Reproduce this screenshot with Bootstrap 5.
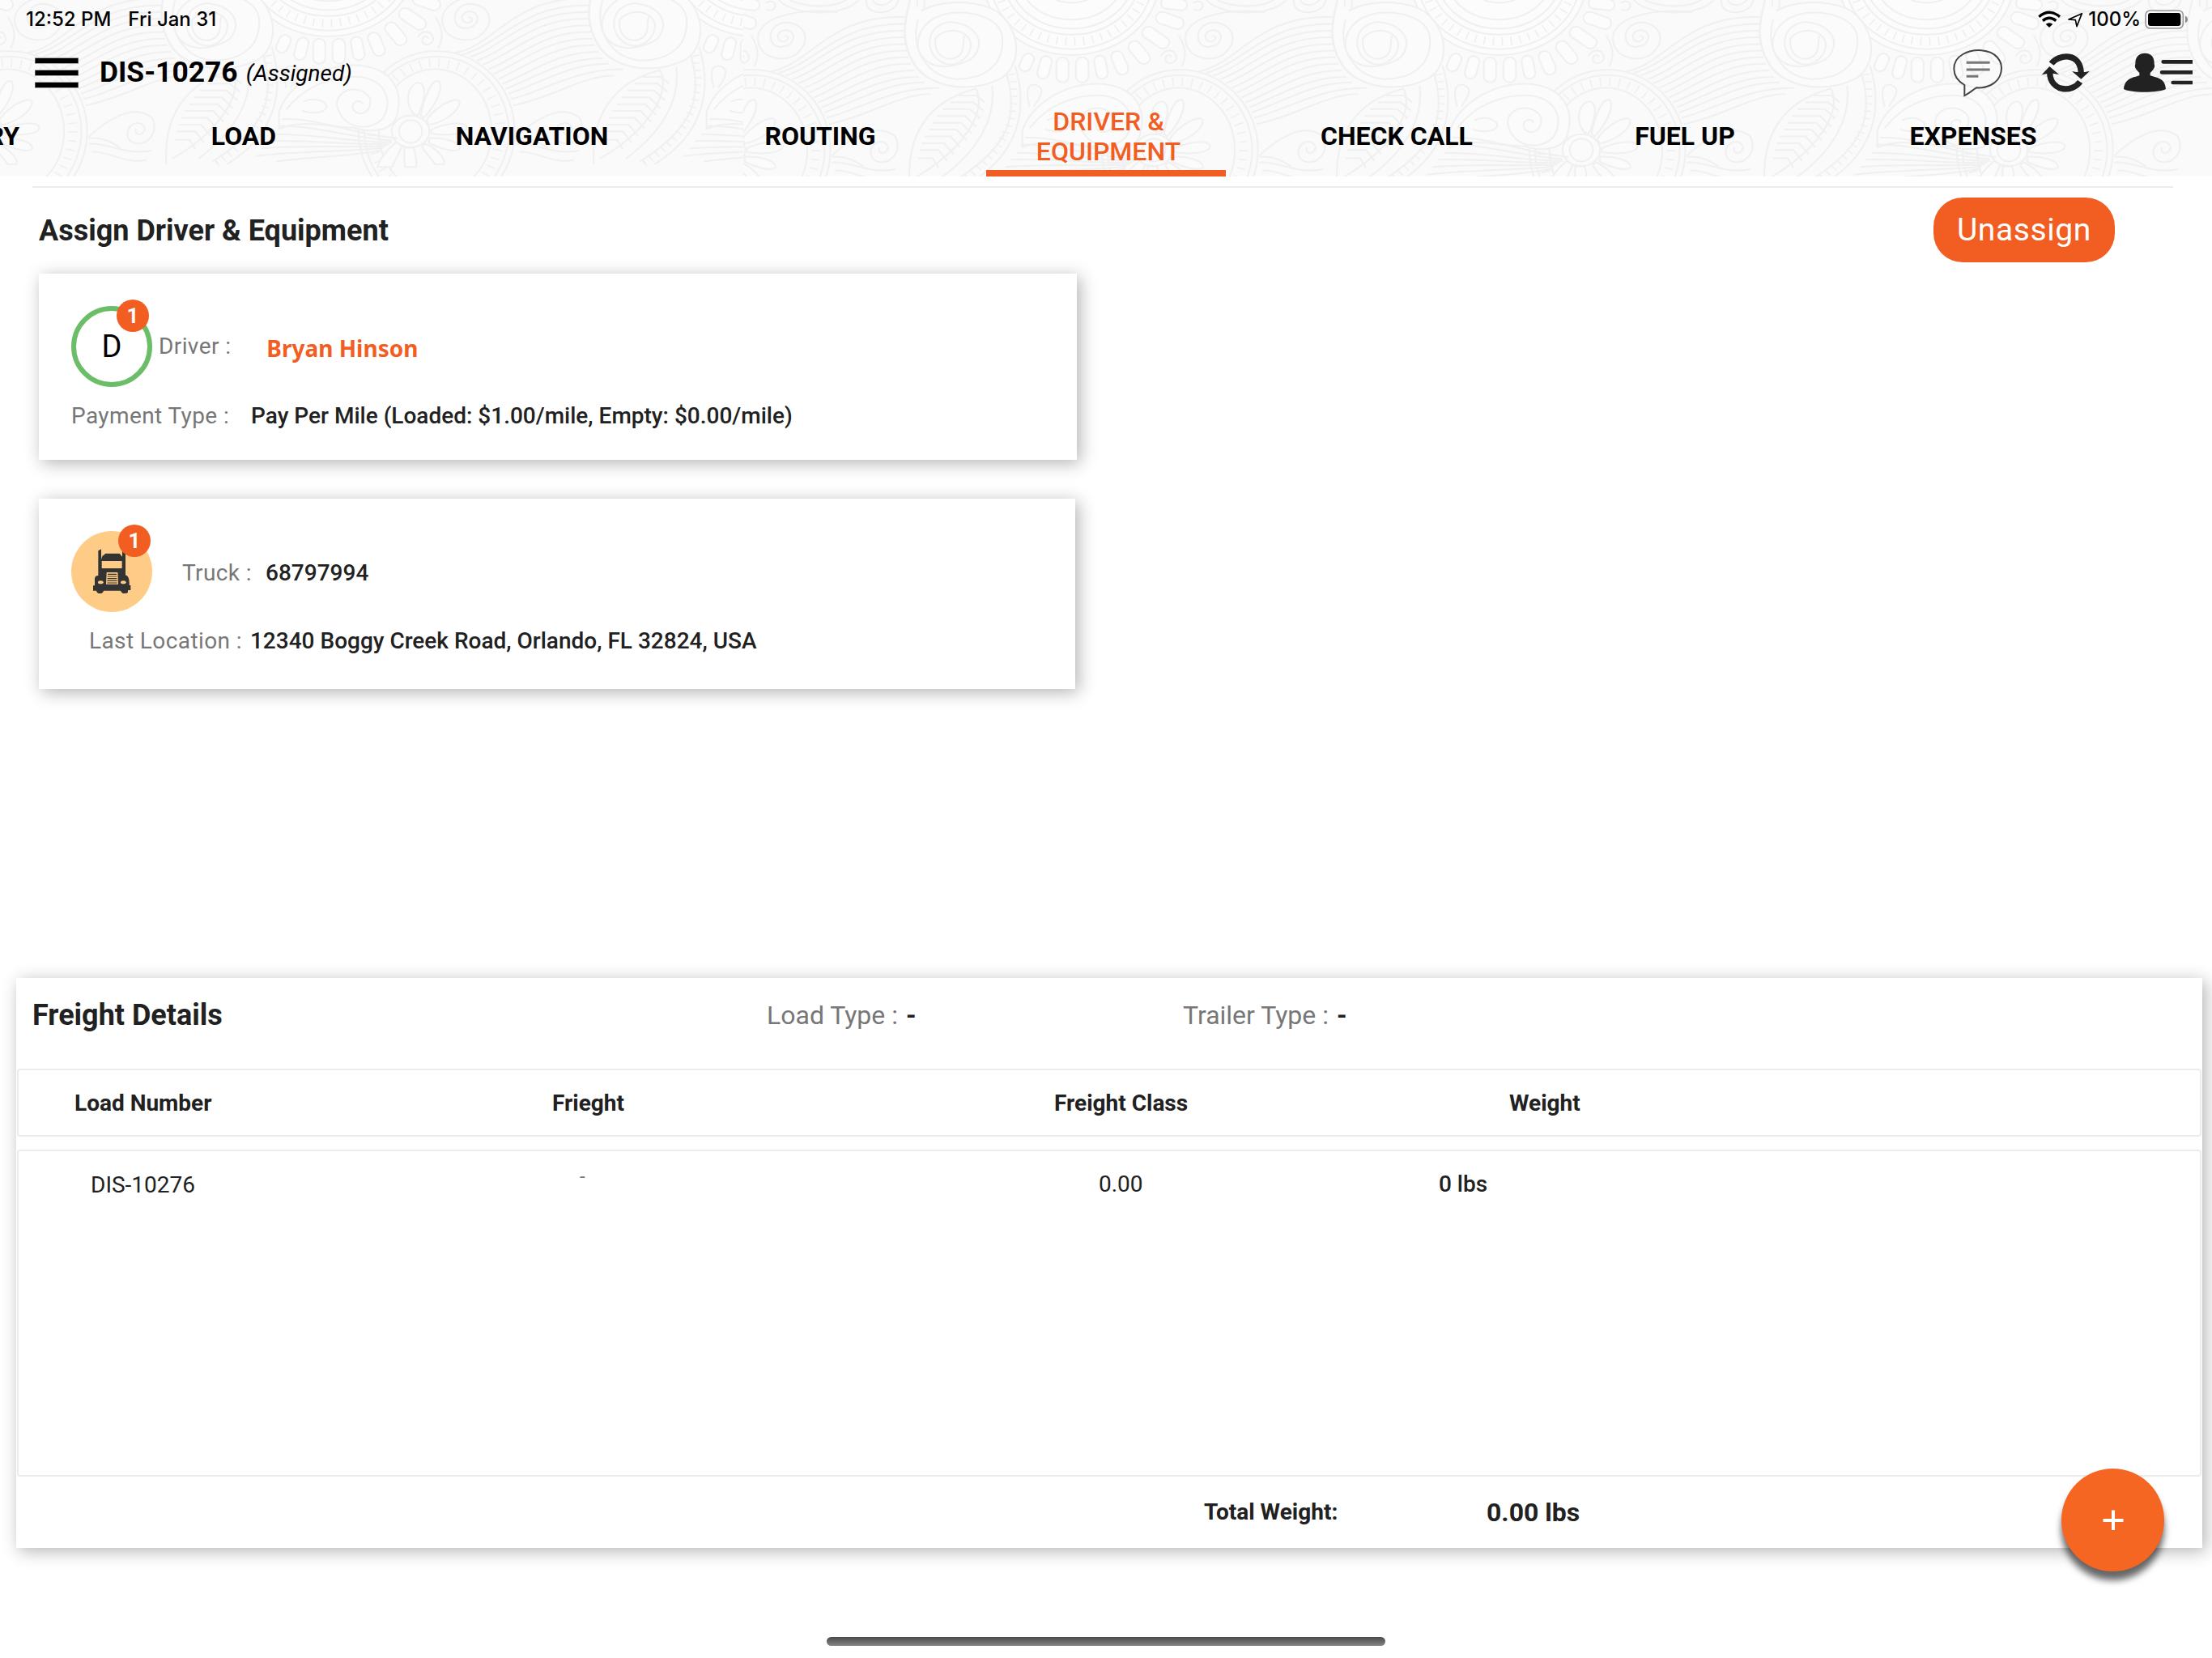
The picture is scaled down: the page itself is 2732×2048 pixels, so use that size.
<!DOCTYPE html>
<html lang="en">
<head>
<meta charset="utf-8">
<meta name="viewport" content="width=device-width, initial-scale=1">
<title>DIS-10276 – Driver &amp; Equipment</title>
<link href="https://cdn.jsdelivr.net/npm/bootstrap@5.3.0/dist/css/bootstrap.min.css" rel="stylesheet">
<style>
  :root { --brand: #f25d22; --ink: #212121; --line: #ececec; }
  body { font-family: Roboto, "Liberation Sans", sans-serif; font-size: 28px; line-height: 32px; color: var(--ink); background: #fff; width: 2732px; height: 2048px; overflow: hidden; }
  svg { display: block; }
  .masthead { height: 218px; background: #fafafa; color: #000; }
  .paisley { inset: 0; width: 2732px; height: 218px; }
  .status-bar { height: 48px; padding: 0 29px 0 32px; font: 500 24px/48px Inter, sans-serif; }
  .status-date { margin-left: 21px; }
  .title-bar { height: 76px; padding: 7px 24px 0 43px; }
  .dispatch-id { font-size: 35.4px; font-weight: 700; line-height: 40px; margin-left: 26px; margin-top: -2px; }
  .dispatch-state { font-size: 28px; font-style: italic; margin-left: 10px; padding-top: 2px; }
  .icon-sync { margin-left: 46px; }
  .icon-crew { margin-left: 41px; }
  .tab-strip { height: 94px; }
  .tab-strip .nav-item { width: 356px; flex: none; }
  .tab-strip .nav-item:first-child { width: 123px; padding-right: 99px; }
  .tab-strip .nav-link { width: 296px; height: 94px; padding: 3px 40px 0; border-bottom: 8px solid transparent; color: #000; font-size: 32px; font-weight: 700; line-height: 37px; text-align: center; }
  .tab-strip .nav-item:first-child .nav-link { width: auto; padding: 3px 0 0; }
  .tab-strip .nav-link.active { color: var(--brand); border-color: var(--brand); font-weight: 500; margin-right: 7px; padding-left: 47px; }
  .rule-top { height: 2px; margin: 12px 48px 0 40px; background: var(--line); }
  .assign-head { height: 106px; padding: 0 120px 0 48px; }
  .assign-title, .freight-title { font-size: 36px; font-weight: 700; line-height: 42px; }
  .btn-unassign { --bs-btn-color: #fff; --bs-btn-bg: var(--brand); --bs-btn-hover-bg: var(--brand); --bs-btn-hover-color: #fff; width: 224px; height: 80px; border: 0; border-radius: 36px; font-size: 39px; line-height: 46px; padding: 0; letter-spacing: .6px; margin-top: -2px; }
  .panel { background: #fff; box-shadow: 4px 4px 20px rgba(0,0,0,.3); }
  .driver-panel { width: 1282px; height: 230px; margin-left: 48px; padding: 40px; }
  .truck-panel { width: 1280px; height: 235px; margin: 48px 0 0 48px; padding: 40px; }
  .avatar { width: 100px; height: 100px; border-radius: 50%; }
  .avatar-driver { border: 6px solid #6bbd68; font-size: 38px; color: #000; }
  .avatar-truck { background: #ffcc88; }
  .count { position: absolute; top: -8px; left: 58px; width: 40px; height: 40px; border-radius: 50%; background: var(--brand); color: #fff; font-size: 26px; font-weight: 700; line-height: 40px; text-align: center; }
  .avatar-driver .count { top: -14px; left: 50px; }
  .lbl { color: #777; font-weight: 400; }
  .val { font-weight: 500; }
  .panel-line { margin-top: 20px; }
  .driver-panel .lbl, .truck-panel .lbl { letter-spacing: .4px; }
  .driver-name { font: 700 28px/36px "Noto Sans", sans-serif; color: var(--brand); margin-left: 44px; padding-top: 3px; }
  .freight { width: 2700px; height: 704px; margin: 357px 0 0 20px; }
  .freight-top { height: 112px; }
  .freight-top .lbl, .freight-top .val { font-size: 32px; line-height: 38px; }
  .freight-top .val { font-weight: 700; margin-left: 3px; }
  .grid-box { border: 2px solid var(--line); border-radius: 4px; margin: 0 1px; }
  .grid-head { height: 84px; padding-top: 1px; font-weight: 700; }
  .grid-body { height: 404px; margin-top: 16px; }
  .grid-foot { height: 88px; }
  .cell { flex: none; white-space: nowrap; }
  .fab { position: absolute; left: 2546px; top: 1814px; width: 127px; height: 127px; border-radius: 50%; background: #f46622; box-shadow: 0 11px 8px rgba(0,0,0,.6); }
  .home-bar { width: 690px; height: 11px; border-radius: 6px; margin: 110px 0 0 1021px; background: linear-gradient(#4a4a4a, #858585); }
</style>
</head>
<body>
<header class="masthead position-relative overflow-hidden">
  <svg class="paisley position-absolute" viewBox="0 0 2732 218" fill="none" stroke="#f0f0f0" stroke-width="6">
    <defs>
      <clipPath id="seamLeft"><rect x="0" y="0" width="918" height="218"/></clipPath>
      <clipPath id="seamRight"><rect x="918" y="0" width="1814" height="218"/></clipPath>
      <g id="tile" transform="scale(.357 .337)">
        <!-- mandala rim and petals -->
        <g fill="#fcfcfc">
          <ellipse cx="480" cy="-80" rx="305" ry="282"/><ellipse cx="480" cy="-80" rx="282" ry="260"/>
          <ellipse cx="480" cy="-80" rx="236" ry="207"/><ellipse cx="480" cy="-80" rx="212" ry="185"/>
          <ellipse cx="480" cy="-80" rx="180" ry="152"/><ellipse cx="480" cy="-80" rx="112" ry="90"/>
        </g>
        <ellipse cx="480" cy="-80" rx="259" ry="233" stroke-width="30" stroke-dasharray="5 26"/>
        <g fill="#fcfcfc">
          <rect x="305" y="195" width="40" height="68" rx="20" transform="rotate(24 325 229)"/>
          <rect x="367" y="205" width="40" height="84" rx="20" transform="rotate(14 387 247)"/>
          <rect x="428" y="210" width="42" height="92" rx="21"/><rect x="495" y="210" width="44" height="92" rx="22"/>
          <rect x="562" y="203" width="40" height="86" rx="20" transform="rotate(-10 582 246)"/>
          <rect x="626" y="185" width="42" height="90" rx="21" transform="rotate(-22 647 230)"/>
          <rect x="692" y="145" width="44" height="95" rx="22" transform="rotate(-38 714 192)"/>
          <rect x="750" y="85" width="44" height="105" rx="22" transform="rotate(-54 772 138)"/>
          <rect x="798" y="25" width="44" height="100" rx="22" transform="rotate(-70 820 75)"/>
          <rect x="815" y="-30" width="40" height="90" rx="20" transform="rotate(-84 835 15)"/>
        </g>
        <path d="M900 10q30 -15 35 10q-5 25 -30 15M790 205q15 -30 45 -15q20 30 -10 42q-25 0 -18 -25q12 -12 20 2M850 130q40 60 10 115"/>
        <!-- small snail -->
        <path d="M1150 45C1050 30 890 50 875 130C865 215 970 235 1010 195C1060 150 1040 85 970 82C910 85 900 165 950 172C1000 175 1015 115 970 110C935 112 935 155 965 152C985 145 980 130 965 132"/>
        <path d="M940 -10C980 60 1180 70 1230 -10M970 -10C1020 30 1150 35 1190 -10M1250 0C1240 60 1350 60 1360 0M1270 -10C1270 25 1320 30 1340 -5M1400 0V90M1425 0V70M1450 0V60"/>
        <!-- waves -->
        <path d="M920 262C1060 235 1120 50 1390 62M945 268C1080 230 1150 80 1390 88M970 277C1090 240 1160 105 1390 112M995 290C1110 250 1180 130 1390 137M1015 305C1130 260 1200 155 1390 162M1035 322C1150 275 1220 180 1392 186M1052 340C1160 290 1240 205 1395 210M1068 358C1170 310 1260 230 1402 234M1082 376C1190 330 1280 255 1415 258M1094 394C1200 350 1300 280 1430 282M1104 412C1220 370 1320 300 1450 302M1112 432C1240 395 1340 320 1500 322M1120 455C1260 425 1360 345 1470 345"/>
        <!-- flower ring -->
        <ellipse cx="855" cy="550" rx="270" ry="295"/><ellipse cx="855" cy="550" rx="250" ry="275"/><ellipse cx="850" cy="550" rx="195" ry="228"/>
        <ellipse cx="853" cy="550" rx="222" ry="251" stroke-width="32" stroke-dasharray="5 28"/>
        <g fill="#fbfbfb">
          <path d="M775 485C740 440 760 370 795 372C825 380 810 450 790 490Z"/>
          <path d="M800 490C810 430 840 350 865 368C880 400 840 470 810 500Z"/>
          <path d="M820 510C850 460 920 420 935 440C935 480 870 520 828 525Z"/>
          <path d="M835 545C880 520 950 510 960 535C955 565 880 565 838 558Z"/>
          <path d="M830 575C880 570 940 590 935 615C915 630 860 610 828 592Z"/>
          <path d="M815 595C850 610 890 650 880 670H850C830 640 810 620 805 605Z"/>
          <path d="M745 610C740 640 745 670 745 680H785C785 650 780 620 775 610Z"/>
          <path d="M715 590C680 620 660 650 650 680H700C715 650 730 620 735 602Z"/>
        </g>
        <ellipse cx="765" cy="550" rx="65" ry="58" fill="#fbfbfb"/><ellipse cx="765" cy="550" rx="40" ry="42"/>
        <!-- scroll -->
        <path fill="#fbfbfb" d="M310 480C340 380 460 300 590 308C700 320 745 400 715 500C690 560 600 550 570 535C500 540 400 500 310 540Z"/>
        <path d="M335 470C400 380 500 345 590 350C690 365 700 450 670 500C620 560 520 535 510 450C510 390 600 375 625 430C635 490 570 500 565 460C565 440 590 430 600 450"/>
        <path d="M395 440C430 425 470 435 475 460C465 485 420 485 390 475M335 390C320 330 330 310 350 310C385 315 385 340 350 390"/>
        <path d="M320 505C450 500 560 560 720 575M310 530C450 530 560 575 700 583M290 560C450 560 560 590 700 590M270 585C420 580 560 600 690 597M250 612C400 600 560 610 680 603M230 640C400 620 560 625 670 610M300 660C450 640 580 640 665 618"/>
        <!-- leaf and beaded stem -->
        <path d="M285 240C330 400 300 560 130 670M255 270C300 430 260 540 80 660M205 315C220 430 160 550 30 650M-80 670C-90 500 -20 370 150 325M150 325C190 420 90 560 -60 650"/>
        <path d="M272 270C300 430 250 560 90 670" stroke-width="26" stroke-dasharray="5 22"/>
        <path d="M90 350H150L180 375M60 375H140L175 405M35 400H128L165 435M15 425H112L150 465M0 450H98L135 490M-15 475H82L118 515M-28 500H62L95 540M-38 525H40L72 565M-45 550H20L50 590M-52 580H0L20 615"/>
        <!-- lower-right curl -->
        <path d="M1130 570C1180 520 1280 440 1350 500C1380 570 1310 620 1270 580C1245 530 1310 495 1325 540C1320 570 1285 565 1295 540M1130 595C1200 590 1260 640 1350 620M1140 625C1200 620 1250 670 1330 655M1130 575C1180 570 1210 590 1240 610"/>
        <!-- large snail -->
        <g id="snail">
          <path fill="#fbfbfb" d="M-40 40C30 0 130 0 200 30C290 70 325 220 240 285C130 345 -10 320 -60 240C-110 160 -100 90 -78 0"/>
          <path d="M-50 70C-80 180 -20 280 80 290C190 290 250 230 240 130C225 60 130 40 60 48C-20 60 -60 120 -50 180C-20 270 90 250 140 210C185 150 150 90 60 80C-20 90 -30 180 20 220C70 260 130 220 132 160C120 100 40 100 10 140C0 200 50 235 90 205C115 180 100 160 110 130"/>
        </g>
        <use href="#snail" x="1478"/>
      </g>
    </defs>
    <g clip-path="url(#seamLeft)"><use href="#tile" x="-294" y="-23"/><use href="#tile" x="234" y="-23"/><use href="#tile" x="762" y="-23"/></g>
    <g clip-path="url(#seamRight)"><use href="#tile" x="624"/><use href="#tile" x="1152"/><use href="#tile" x="1680"/><use href="#tile" x="2208"/></g>
  </svg>

  <div class="status-bar position-relative d-flex align-items-center">
    <span>12:52 PM</span><span class="status-date">Fri Jan 31</span>
    <svg class="ms-auto" width="58" height="26" viewBox="855 33 174 78">
      <g fill="none" stroke="#000" stroke-width="10"><path d="M859 62Q897 30 936 62"/><path d="M873 77Q897 57 922 77"/></g>
      <path d="M884 89Q897 80 910 89L897 102Z"/>
      <path d="M969 72L1018 50L999 98L994 74Z" fill="none" stroke="#000" stroke-width="5" stroke-linejoin="round"/>
    </svg>
    <span class="ps-1 me-1">100%</span>
    <svg width="55" height="26" viewBox="1248 33 165 78">
      <rect x="1254" y="39" width="139" height="66" rx="17" fill="none" stroke="#999" stroke-width="5"/>
      <rect x="1263" y="48" width="121" height="48" rx="9"/><path d="M1401 59Q1410 63 1410 72T1401 85Z" fill="#888"/>
    </svg>
  </div>

  <div class="title-bar position-relative d-flex align-items-center">
    <svg width="54" height="40" viewBox="0 0 54 40"><g fill="#aaa"><rect y="1" width="54" height="8"/><rect y="16" width="54" height="8"/><rect y="31" width="54" height="8"/></g><g fill="#000"><rect x=".5" y="2" width="53" height="6"/><rect x=".5" y="17" width="53" height="6"/><rect x=".5" y="32" width="53" height="6"/></g></svg>
    <span class="dispatch-id">DIS-10276</span><span class="dispatch-state">(Assigned)</span>
    <svg class="ms-auto" width="64" height="62" viewBox="540 176 192 186" fill="none" stroke="#444" stroke-width="6">
      <path d="M586 314C535 285 535 225 580 200C620 178 680 180 708 212C734 243 726 292 684 314C664 323 648 326 630 324C615 333 602 346 586 353Z"/>
      <path d="M593 231H680M593 257H680M593 282H637" stroke="#777" stroke-width="9"/>
    </svg>
    <svg class="icon-sync" width="60" height="50" viewBox="870 195 180 150">
      <g fill="none" stroke="#222" stroke-width="22"><path d="M908 236C935 200 1016 192 1018 272"/><path d="M1014 303C985 345 903 340 902 268"/></g>
      <path d="M984 264Q1018 272 1050 263L1018 293Z" fill="#222"/><path d="M872 277L901 246L937 277Q905 268 872 277Z" fill="#222"/>
    </svg>
    <svg class="icon-crew" width="86" height="50" viewBox="1173 195 258 150" fill="#222">
      <path d="M1254 197C1280 197 1290 214 1289 237C1294 251 1284 259 1274 270V280C1300 289 1330 290 1332 330C1300 345 1205 345 1176 330C1180 290 1210 288 1234 280V270C1225 261 1213 250 1219 237C1218 214 1230 197 1254 197Z"/>
      <path d="M1322 229H1431M1317 268H1431M1358 306H1431" stroke="#222" stroke-width="14" stroke-linecap="round"/>
    </svg>
  </div>

  <ul class="tab-strip nav flex-nowrap position-relative">
    <li class="nav-item d-flex justify-content-end"><a class="nav-link d-flex align-items-center justify-content-center">RY</a></li>
    <li class="nav-item d-flex justify-content-center"><a class="nav-link d-flex align-items-center justify-content-center">LOAD</a></li>
    <li class="nav-item d-flex justify-content-center"><a class="nav-link d-flex align-items-center justify-content-center">NAVIGATION</a></li>
    <li class="nav-item d-flex justify-content-center"><a class="nav-link d-flex align-items-center justify-content-center">ROUTING</a></li>
    <li class="nav-item d-flex justify-content-center"><a class="nav-link active d-flex align-items-center justify-content-center">DRIVER &amp; EQUIPMENT</a></li>
    <li class="nav-item d-flex justify-content-center"><a class="nav-link d-flex align-items-center justify-content-center">CHECK CALL</a></li>
    <li class="nav-item d-flex justify-content-center"><a class="nav-link d-flex align-items-center justify-content-center">FUEL UP</a></li>
    <li class="nav-item d-flex justify-content-center"><a class="nav-link d-flex align-items-center justify-content-center">EXPENSES</a></li>
  </ul>
</header>

<main>
  <div class="rule-top"></div>
  <div class="assign-head d-flex align-items-center justify-content-between">
    <h1 class="assign-title m-0">Assign Driver &amp; Equipment</h1>
    <button class="btn btn-unassign" type="button">Unassign</button>
  </div>

  <section class="panel driver-panel">
    <div class="d-flex align-items-center">
      <div class="avatar avatar-driver position-relative d-flex align-items-center justify-content-center">D<span class="count">1</span></div>
      <span class="lbl ms-2 ps-0">Driver :</span><span class="driver-name">Bryan Hinson</span>
    </div>
    <div class="panel-line d-flex">
      <span class="lbl">Payment Type :</span><span class="val" style="margin-left:27px">Pay Per Mile (Loaded: $1.00/mile, Empty: $0.00/mile)</span>
    </div>
  </section>

  <section class="panel truck-panel">
    <div class="d-flex align-items-center">
      <div class="avatar avatar-truck position-relative d-flex align-items-center justify-content-center">
        <svg width="50" height="58" viewBox="100 108 150 174" fill="#333">
          <path d="M125 118L136 112V150L140 138L152 128H204L214 140V112L226 118V208Q240 212 240 236V246H245V264H235V272Q232 276 222 276Q212 276 208 266H145Q142 276 132 276Q120 276 118 266H106V247H112V222Q112 210 125 210Z"/>
          <rect x="138" y="156" width="75" height="27" fill="#ffcc88"/><path d="M156 198H197L199 242H154Z" fill="#ffcc88"/>
          <path d="M160 205H193M159 213H194M159 221H194M158 229H195M158 237H195" stroke="#333" stroke-width="3.5"/>
          <ellipse cx="134" cy="235" rx="10" ry="6" fill="#ffcc88"/><ellipse cx="218" cy="235" rx="10" ry="6" fill="#ffcc88"/>
        </svg>
        <span class="count">1</span>
      </div>
      <span class="lbl pt-1" style="margin-left:37px">Truck :</span><span class="val pt-1" style="margin-left:17px">68797994</span>
    </div>
    <div class="panel-line d-flex" style="margin-left:22px">
      <span class="lbl">Last Location :</span><span class="val" style="margin-left:10px">12340 Boggy Creek Road, Orlando, FL 32824, USA</span>
    </div>
  </section>

  <section class="panel freight">
    <div class="freight-top d-flex align-items-start">
      <h2 class="freight-title m-0 cell" style="width:906px;padding:25px 0 0 20px">Freight Details</h2>
      <div class="cell" style="width:514px;padding:27px 0 0 21px"><span class="lbl">Load Type :</span> <span class="val">-</span></div>
      <div class="cell" style="padding:27px 0 0 21px"><span class="lbl">Trailer Type :</span> <span class="val">-</span></div>
    </div>
    <div class="grid-box grid-head d-flex align-items-center">
      <span class="cell" style="width:589px;padding-left:69px">Load Number</span><span class="cell" style="width:620px;padding-left:70px">Frieght</span>
      <span class="cell" style="width:562px;padding-left:70px">Freight Class</span><span class="cell" style="padding-left:70px">Weight</span>
    </div>
    <div class="grid-box grid-body d-flex align-items-start">
      <span class="cell" style="width:623px;padding:26px 0 0 89px">DIS-10276</span><span class="cell lbl" style="width:642px;padding:15px 0 0 70px;font-size:24px">-</span>
      <span class="cell" style="width:419px;padding:25px 0 0 69px">0.00</span><span class="cell val" style="padding:25px 0 0 70px">0 lbs</span>
    </div>
    <div class="grid-foot d-flex align-items-center">
      <span class="cell fw-bold" style="width:1747px;padding-left:1467px">Total Weight:</span><span class="cell fw-bold" style="padding-left:69px;font-size:32px">0.00 lbs</span>
    </div>
  </section>
  <div class="home-bar"></div>
  <button class="fab border-0 p-0 d-flex align-items-center justify-content-center" type="button" aria-label="Add"><svg width="26" height="26" viewBox="0 0 26 26"><path d="M13 .5V25M.5 13H25.5" stroke="#fff" stroke-width="4"/></svg></button>
</main>
<script src="https://cdn.jsdelivr.net/npm/bootstrap@5.3.0/dist/js/bootstrap.bundle.min.js"></script>
</body>
</html>
